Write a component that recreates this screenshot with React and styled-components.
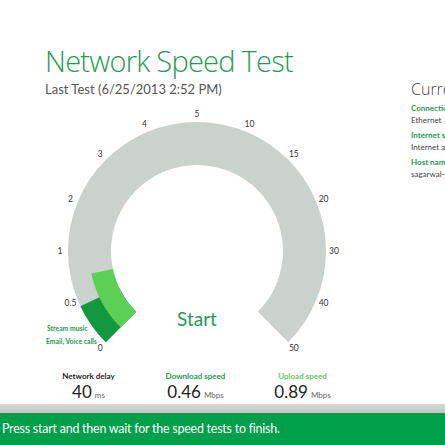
import React from 'react';
import styled, { createGlobalStyle } from 'styled-components';

const GlobalStyle = createGlobalStyle`
   html, body {
      margin: 0;
      padding: 0;
      background: #ffffff;
      font-family: Lato, "Open Sans", "Liberation Sans", sans-serif;
   }
`;

const Page = styled.div`
   width: 445px;
   height: 445px;
   overflow: hidden;
   display: flex;
   flex-direction: column;
   background: #ffffff;
`;

const Main = styled.div`
   height: 404px;
   flex-shrink: 0;
   display: grid;
   grid-template-columns: 411px 34px;
`;

const LeftCol = styled.div`
   display: flex;
   flex-direction: column;
   min-width: 0;
`;

const Header = styled.header`
   padding: 44px 0 0 45px;
   height: 105px;
   box-sizing: border-box;
`;

const Title = styled.h1`
   margin: 0;
   font-family: "Open Sans", "Liberation Sans", sans-serif;
   font-weight: 300;
   font-size: 29px;
   line-height: 34px;
   color: #1e9b52;
   letter-spacing: -0.75px;
   white-space: nowrap;
`;

const Subtitle = styled.div`
   margin-top: 3px;
   font-size: 13px;
   line-height: 16px;
   color: #555555;
   white-space: nowrap;
`;

const GaugeWrap = styled.div`
   position: relative;
   height: 255px;
`;

const StartButton = styled.button`
   position: absolute;
   left: 168px;
   top: 202px;
   width: 58px;
   border: none;
   background: none;
   padding: 0;
   font-family: Lato, "Open Sans", sans-serif;
   font-size: 19px;
   line-height: normal;
   color: #1e9b52;
   cursor: pointer;
`;

const Metrics = styled.div`
   display: grid;
   grid-template-columns: repeat(3, 107px);
   margin-left: 35px;
   padding-top: 11px;
`;

const Metric = styled.div`
   display: flex;
   flex-direction: column;
   align-items: center;
`;

const MetricLabel = styled.div`
   font-size: 8px;
   font-weight: 700;
   line-height: 11px;
   color: ${p => p.color};
   white-space: nowrap;
`;

const MetricValue = styled.div`
   font-size: 17px;
   line-height: 20px;
   color: #222222;
   white-space: nowrap;
`;

const Unit = styled.span`
   font-size: 8px;
   color: #666666;
   margin-left: 3px;
`;

const RightCol = styled.aside`
   padding-top: 79px;
   min-width: 0;
   overflow: hidden;
   white-space: nowrap;
`;

const PanelTitle = styled.div`
   font-family: "Open Sans", "Liberation Sans", sans-serif;
   font-size: 16px;
   font-weight: 300;
   line-height: 20px;
   color: #444444;
   margin-bottom: 2px;
`;

const InfoLabel = styled.div`
   font-size: 8px;
   font-weight: 700;
   line-height: 12px;
   color: #1e9b52;
   margin-top: 3px;
`;

const InfoValue = styled.div`
   font-size: 8px;
   line-height: 12px;
   color: #444444;
`;

const Divider = styled.div`
   height: 9px;
   background: linear-gradient(#d6d6d6, #c6c6c6);
   flex-shrink: 0;
`;

const StatusBar = styled.footer`
   height: 32px;
   flex-shrink: 0;
   background: #00a04b;
   color: #ffffff;
   font-size: 12.4px;
   letter-spacing: -0.2px;
   line-height: 32px;
   padding-left: 2px;
   white-space: nowrap;
`;

const CX = 197;
const CY = 146;
const R_OUT = 129;
const R_IN = 86;

const pt = (r, deg) => {
   const a = (deg * Math.PI) / 180;
   return [CX + r * Math.cos(a), CY - r * Math.sin(a)];
};

const band = (rIn, rOut, from, to) => {
   const large = from - to > 180 ? 1 : 0;
   const [x0, y0] = pt(rOut, from);
   const [x1, y1] = pt(rOut, to);
   const [x2, y2] = pt(rIn, to);
   const [x3, y3] = pt(rIn, from);
   return `M${x0} ${y0} A${rOut} ${rOut} 0 ${large} 1 ${x1} ${y1} L${x2} ${y2} A${rIn} ${rIn} 0 ${large} 0 ${x3} ${y3} Z`;
};

const scale = ['0', '0.5', '1', '2', '3', '4', '5', '10', '15', '20', '30', '40', '50'];

const FONT = 'Lato, Open Sans, sans-serif';

const Gauge = () =>
   <svg width="411" height="255" viewBox="0 0 411 255">
      <path d={band(R_IN, R_OUT, 225, -45)} fill="#cbd1cc" />
      <path d={band(R_IN, R_OUT, 225, 205.3)} fill="#12993f" />
      <path d={band(R_IN, 108, 225, 192)} fill="#5ccf55" />
      {scale.map((s, i) => {
         const [x, y] = pt(137, 225 - i * 22.5);
         return (
            <text key={s} x={x} y={y} fontSize="8.5" fill="#333" textAnchor="middle"
               dominantBaseline="central" fontFamily={FONT}>
               {s}
            </text>
         );
      })}
      <text x="47" y="225.5" fontSize="6.8" fontWeight="700" fill="#1e9b52" fontFamily={FONT}>Stream music</text>
      <text x="46" y="238.5" fontSize="6.8" fontWeight="700" fill="#1e9b52" fontFamily={FONT}>Email, Voice calls</text>
   </svg>;

const App = () =>
   <Page>
      <GlobalStyle />
      <Main>
         <LeftCol>
            <Header>
               <Title>Network Speed Test</Title>
               <Subtitle>Last Test (6/25/2013 2:52 PM)</Subtitle>
            </Header>
            <GaugeWrap>
               <Gauge />
               <StartButton>Start</StartButton>
            </GaugeWrap>
            <Metrics>
               <Metric>
                  <MetricLabel color="#222222">Network delay</MetricLabel>
                  <MetricValue>40<Unit>ms</Unit></MetricValue>
               </Metric>
               <Metric>
                  <MetricLabel color="#1e9b52">Download speed</MetricLabel>
                  <MetricValue>0.46<Unit>Mbps</Unit></MetricValue>
               </Metric>
               <Metric>
                  <MetricLabel color="#62cc5c">Upload speed</MetricLabel>
                  <MetricValue>0.89<Unit>Mbps</Unit></MetricValue>
               </Metric>
            </Metrics>
         </LeftCol>
         <RightCol>
            <PanelTitle>Current</PanelTitle>
            <InfoLabel>Connection</InfoLabel>
            <InfoValue>Ethernet</InfoValue>
            <InfoLabel>Internet service</InfoLabel>
            <InfoValue>Internet access</InfoValue>
            <InfoLabel>Host name</InfoLabel>
            <InfoValue>sagarwal-pc</InfoValue>
         </RightCol>
      </Main>
      <Divider />
      <StatusBar>Press start and then wait for the speed tests to finish.</StatusBar>
   </Page>;

export default App;
